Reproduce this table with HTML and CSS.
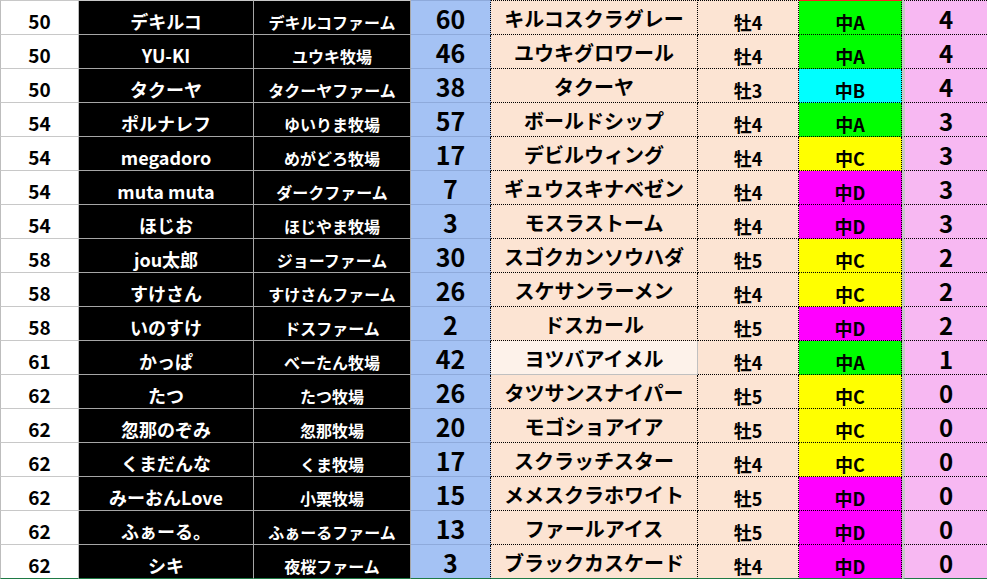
FILE: index.html
```html
<!DOCTYPE html>
<html lang="ja">
<head>
<meta charset="utf-8">
<title>順位表</title>
<link rel="stylesheet" href="styles.css">
</head>
<body>
<div class="sheet">
  <div class="row"><div class="c rank">50</div><div class="c name">デキルコ</div><div class="c farm">デキルコファーム</div><div class="c num">60</div><div class="c horse">キルコスクラグレー</div><div class="c sex">牡4</div><div class="c cls a">中A</div><div class="c pts">4</div></div>
  <div class="row"><div class="c rank">50</div><div class="c name">YU-KI</div><div class="c farm">ユウキ牧場</div><div class="c num">46</div><div class="c horse">ユウキグロワール</div><div class="c sex">牡4</div><div class="c cls a">中A</div><div class="c pts">4</div></div>
  <div class="row"><div class="c rank">50</div><div class="c name">タクーヤ</div><div class="c farm">タクーヤファーム</div><div class="c num">38</div><div class="c horse">タクーヤ</div><div class="c sex">牡3</div><div class="c cls b">中B</div><div class="c pts">4</div></div>
  <div class="row"><div class="c rank">54</div><div class="c name">ポルナレフ</div><div class="c farm">ゆいりま牧場</div><div class="c num">57</div><div class="c horse">ボールドシップ</div><div class="c sex">牡4</div><div class="c cls a">中A</div><div class="c pts">3</div></div>
  <div class="row"><div class="c rank">54</div><div class="c name">megadoro</div><div class="c farm">めがどろ牧場</div><div class="c num">17</div><div class="c horse">デビルウィング</div><div class="c sex">牡4</div><div class="c cls cc">中C</div><div class="c pts">3</div></div>
  <div class="row"><div class="c rank">54</div><div class="c name">muta muta</div><div class="c farm">ダークファーム</div><div class="c num">7</div><div class="c horse">ギュウスキナベゼン</div><div class="c sex">牡4</div><div class="c cls d">中D</div><div class="c pts">3</div></div>
  <div class="row"><div class="c rank">54</div><div class="c name">ほじお</div><div class="c farm">ほじやま牧場</div><div class="c num">3</div><div class="c horse">モスラストーム</div><div class="c sex">牡4</div><div class="c cls d">中D</div><div class="c pts">3</div></div>
  <div class="row"><div class="c rank">58</div><div class="c name">jou太郎</div><div class="c farm">ジョーファーム</div><div class="c num">30</div><div class="c horse">スゴクカンソウハダ</div><div class="c sex">牡5</div><div class="c cls cc">中C</div><div class="c pts">2</div></div>
  <div class="row"><div class="c rank">58</div><div class="c name">すけさん</div><div class="c farm">すけさんファーム</div><div class="c num">26</div><div class="c horse">スケサンラーメン</div><div class="c sex">牡4</div><div class="c cls cc">中C</div><div class="c pts">2</div></div>
  <div class="row"><div class="c rank">58</div><div class="c name">いのすけ</div><div class="c farm">ドスファーム</div><div class="c num">2</div><div class="c horse">ドスカール</div><div class="c sex">牡5</div><div class="c cls d">中D</div><div class="c pts">2</div></div>
  <div class="row"><div class="c rank">61</div><div class="c name">かっぱ</div><div class="c farm">べーたん牧場</div><div class="c num">42</div><div class="c horse sel">ヨツバアイメル</div><div class="c sex">牡4</div><div class="c cls a">中A</div><div class="c pts">1</div></div>
  <div class="row"><div class="c rank">62</div><div class="c name">たつ</div><div class="c farm">たつ牧場</div><div class="c num">26</div><div class="c horse">タツサンスナイパー</div><div class="c sex">牡5</div><div class="c cls cc">中C</div><div class="c pts">0</div></div>
  <div class="row"><div class="c rank">62</div><div class="c name">忽那のぞみ</div><div class="c farm">忽那牧場</div><div class="c num">20</div><div class="c horse">モゴショアイア</div><div class="c sex">牡5</div><div class="c cls cc">中C</div><div class="c pts">0</div></div>
  <div class="row"><div class="c rank">62</div><div class="c name">くまだんな</div><div class="c farm">くま牧場</div><div class="c num">17</div><div class="c horse">スクラッチスター</div><div class="c sex">牡4</div><div class="c cls cc">中C</div><div class="c pts">0</div></div>
  <div class="row"><div class="c rank">62</div><div class="c name">みーおんLove</div><div class="c farm">小栗牧場</div><div class="c num">15</div><div class="c horse">メメスクラホワイト</div><div class="c sex">牡5</div><div class="c cls d">中D</div><div class="c pts">0</div></div>
  <div class="row"><div class="c rank">62</div><div class="c name">ふぁーる。</div><div class="c farm">ふぁーるファーム</div><div class="c num">13</div><div class="c horse">ファールアイス</div><div class="c sex">牡5</div><div class="c cls d">中D</div><div class="c pts">0</div></div>
  <div class="row"><div class="c rank">62</div><div class="c name">シキ</div><div class="c farm">夜桜ファーム</div><div class="c num">3</div><div class="c horse">ブラックカスケード</div><div class="c sex">牡4</div><div class="c cls d">中D</div><div class="c pts">0</div></div>
</div>
</body>
</html>
```

FILE: styles.css
```css
html, body {
  margin: 0;
  padding: 0;
  background: #ffffff;
}

body {
  font-family: "Noto Sans CJK JP", "Noto Sans", sans-serif;
  font-weight: 700;
  color: #000;
  width: 987px;
  height: 579px;
  overflow: hidden;
}

.sheet {
  display: flex;
  flex-direction: column;
  width: 987px;
}

.row {
  display: flex;
}

.c {
  box-sizing: border-box;
  height: 34px;
  display: flex;
  align-items: center;
  justify-content: center;
  line-height: 1;
  white-space: nowrap;
  border-bottom: 1px dotted #000;
  border-right: 1px dotted #000;
}

.row:first-child .c {
  height: 35px;
  border-top: 1px dotted #000;
}

.row:last-child .c {
  border-bottom: 1px solid #1f7a45;
}

.rank {
  width: 79px;
  background: #fff;
  border-left: 1px solid #bdbdbd;
  border-right: 1px solid #bdbdbd;
  border-bottom: 1px solid #c8c8c8;
  font-size: 19px;
  padding-top: 6px;
}

.name {
  width: 175px;
  background: #000;
  color: #fff;
  border-right: 1px solid #a6a6a6;
  border-bottom: 1px solid #a6a6a6;
  font-size: 18px;
  padding-top: 6px;
}

.farm {
  width: 157px;
  background: #000;
  color: #fff;
  border-right: 1px solid #a6a6a6;
  border-bottom: 1px solid #a6a6a6;
  font-size: 16px;
  padding-top: 8px;
}

.row:first-child .rank,
.row:first-child .name,
.row:first-child .farm {
  border-top: 1px solid #c8c8c8;
}

.num {
  width: 80px;
  background: #a4c2f4;
  border-bottom: 1px solid #8eaadb;
  font-size: 25px;
  padding-top: 1px;
}

.row:first-child .num {
  border-top: 1px solid #8eaadb;
}

.horse {
  width: 207px;
  background: #fce4d3;
  font-size: 20px;
  padding-top: 2px;
}

.horse.sel {
  background: #fdf2ea;
  border-right: 1px solid #c0c0c0;
  border-bottom: 1px solid #c0c0c0;
}

.sex {
  width: 101px;
  background: #fce4d3;
  font-size: 18px;
  padding-top: 8px;
}

.cls {
  width: 103px;
  font-size: 18px;
  padding-top: 8px;
}

.row:first-child .cls {
  border-top: 1px solid #ff2020;
}

.cls.a { background: #00ff00; }
.cls.b { background: #00ffff; }
.cls.cc { background: #ffff00; }
.cls.d { background: #ff00ff; }

.pts {
  width: 85px;
  background: #f7b8f2;
  border-left: 3px solid #c8c8c8;
  border-right: none;
  font-size: 24px;
  padding-top: 3px;
}
```
